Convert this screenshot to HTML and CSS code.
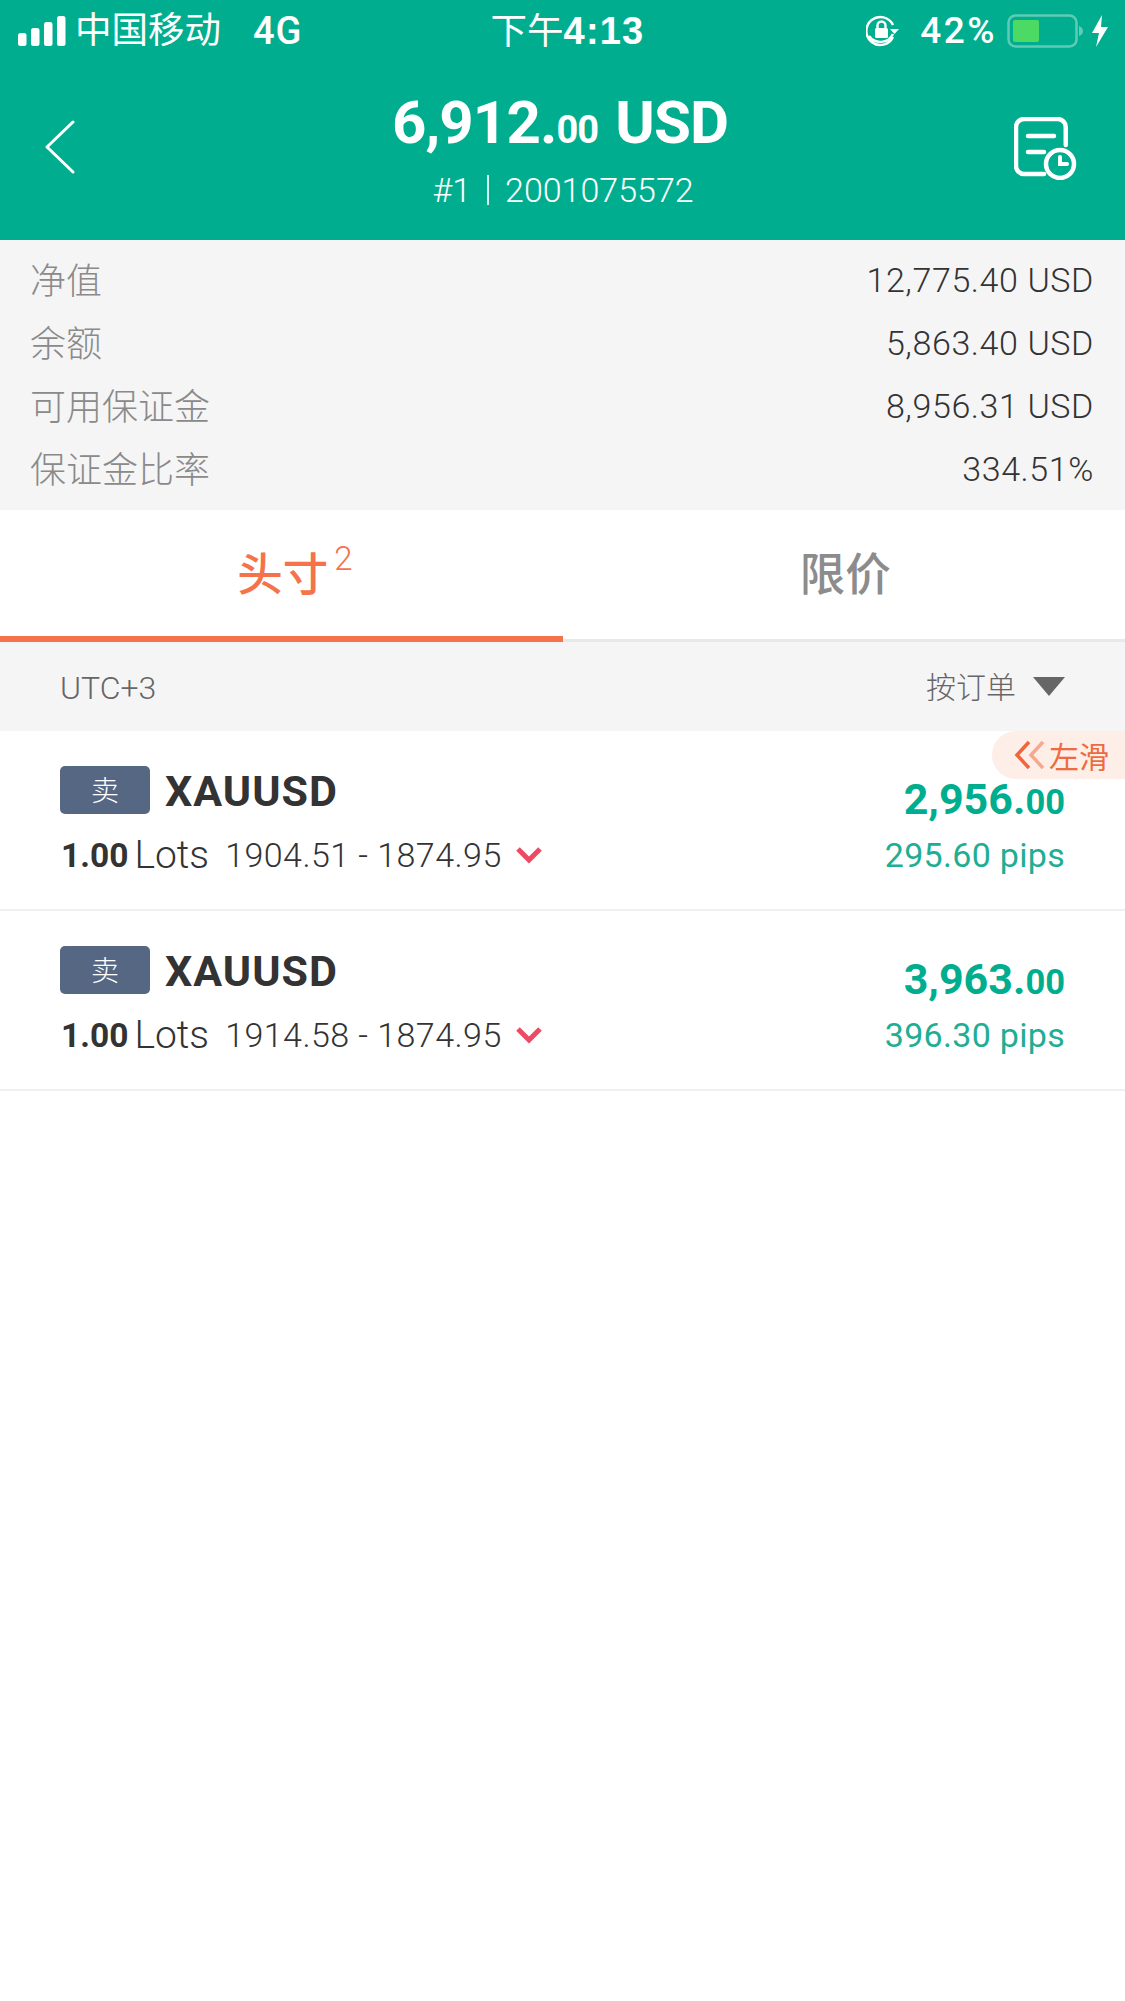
FILE: index.html
```html
<!DOCTYPE html>
<html lang="zh-CN">
<head>
<meta charset="utf-8">
<title>持仓</title>
<link rel="stylesheet" href="styles.css">
</head>
<body>
<header class="top">
  <div class="status">
    <div class="status-left">
      <svg class="signal" width="48" height="30" viewBox="0 0 48 30"><rect x="0" y="17" width="8.500" height="13" rx="2.500"/><rect x="13" y="12" width="8.500" height="18" rx="2.500"/><rect x="26" y="6" width="8.500" height="24" rx="2.500"/><rect x="39" y="0" width="8.500" height="30" rx="2.500"/></svg>
      <span class="carrier">中国移动</span>
      <span class="net">4G</span>
    </div>
    <div class="clock">下午<b>4:13</b></div>
    <div class="status-right">
      <svg class="lock" width="34" height="32" viewBox="0 0 34 32" fill="none" stroke="#fff" stroke-width="2.400"><path d="M27 22a14 14 0 1 1 0-12M27 19a14 14 0 0 1-24 2"/><path d="M24 14h9l-4.500 5z" fill="#fff" stroke="none"/><rect x="9" y="13" width="13" height="10" rx="1.500" fill="#fff" stroke="none"/><path d="M11.500 13v-2.500a4 4 0 0 1 8 0V13"/></svg>
      <span class="pct">42%</span>
      <svg class="battery" width="76" height="34" viewBox="0 0 76 34"><rect x="1.500" y="1.500" width="68" height="31" rx="7" fill="none" stroke="#5fcbb6" stroke-width="2.500"/><rect x="6" y="6" width="26" height="22" rx="2" fill="#4cd964"/><path d="M72 12c3 1 4 3 4 5s-1 4-4 5z" fill="#5fcbb6"/></svg>
      <svg class="bolt" width="18" height="32" viewBox="0 0 18 32"><path d="M11 0 1 18h7l-3 14L17 12h-7z" fill="#fff"/></svg>
    </div>
  </div>
  <div class="nav">
    <svg class="back" width="34" height="54" viewBox="0 0 34 54" fill="none" stroke="#fff" stroke-width="3" stroke-linecap="round" stroke-linejoin="round"><path d="M30 2 4 27l26 25"/></svg>
    <div class="title">
      <div class="amount">6,912.<small>00</small> USD</div>
      <div class="account"><span>#1</span><span class="sep"></span><span>2001075572</span></div>
    </div>
    <svg class="history" width="63" height="63" viewBox="0 0 63 63" fill="none" stroke="#fff" stroke-width="4.500" stroke-linecap="round"><path d="M51.750 28V10a8 8 0 0 0-8-8H10a8 8 0 0 0-8 8v39a8 8 0 0 0 8 8h20"/><path d="M14 19h26M14 35h16"/><circle cx="46" cy="47" r="14"/><path d="M46 40v7h7" stroke-width="4"/></svg>
  </div>
</header>

<section class="summary">
  <div class="sum-row"><span class="label">净值</span><span class="num">12,775.40 USD</span></div>
  <div class="sum-row"><span class="label">余额</span><span class="num">5,863.40 USD</span></div>
  <div class="sum-row"><span class="label">可用保证金</span><span class="num">8,956.31 USD</span></div>
  <div class="sum-row"><span class="label">保证金比率</span><span class="num">334.51%</span></div>
</section>

<nav class="tabs">
  <div class="tab active"><span class="tab-text">头寸<sup>2</sup></span></div>
  <div class="tab"><span class="tab-text">限价</span></div>
</nav>

<div class="filter">
  <span class="utc">UTC+3</span>
  <div class="sort"><span class="label">按订单</span><i class="caret"></i></div>
</div>

<main class="list">
  <div class="hint">
    <svg width="32" height="30" viewBox="0 0 32 30" fill="none" stroke-width="3.500"><path d="M15 2 3 15l12 13" stroke="#f0663c"/><path d="M29 2 17 15l12 13" stroke="#f7a98f"/></svg>
    <span>左滑</span>
  </div>
  <article class="row">
    <div class="row-left">
      <div class="line1"><span class="badge">卖</span><span class="symbol">XAUUSD</span></div>
      <div class="line2"><b>1.00</b><span class="lots">Lots</span><span class="price">1904.51 - 1874.95</span>
        <svg class="chev" width="26" height="18" viewBox="0 0 26 18" fill="none" stroke="#ee4a63" stroke-width="5"><path d="M2 3l11 11L24 3"/></svg></div>
    </div>
    <div class="row-right">
      <div class="profit">2,956.<small>00</small></div>
      <div class="pips">295.60 pips</div>
    </div>
  </article>
  <article class="row">
    <div class="row-left">
      <div class="line1"><span class="badge">卖</span><span class="symbol">XAUUSD</span></div>
      <div class="line2"><b>1.00</b><span class="lots">Lots</span><span class="price">1914.58 - 1874.95</span>
        <svg class="chev" width="26" height="18" viewBox="0 0 26 18" fill="none" stroke="#ee4a63" stroke-width="5"><path d="M2 3l11 11L24 3"/></svg></div>
    </div>
    <div class="row-right">
      <div class="profit">3,963.<small>00</small></div>
      <div class="pips">396.30 pips</div>
    </div>
  </article>
</main>
</body>
</html>
```
FILE: styles.css
```css
* { box-sizing: border-box; }
html, body { margin: 0; padding: 0; }
body {
  width: 1125px;
  height: 2001px;
  overflow: hidden;
  background: #fff;
  font-family: Roboto, "Noto Sans CJK SC", sans-serif;
  color: #333;
}
.top { height: 240px; background: #00ae8f; color: #fff; }
.status {
  height: 62px;
  padding: 0 16px 0 18px;
  display: grid;
  grid-template-columns: 1fr auto 1fr;
  align-items: center;
}
.status-left, .status-right { display: flex; align-items: center; }
.status-right { justify-content: flex-end; }
.carrier { font-size: 36.500px; margin-left: 9px; line-height: 40px; }
.net { font-size: 38px; font-weight: 500; line-height: 40px; margin-left: 32px; letter-spacing: 1px; }
.signal { fill: #fff; }
.clock { font-size: 36.500px; line-height: 40px; padding-left: 8px; }
.clock b { font-family: "Liberation Sans", sans-serif; font-size: 38px; font-weight: 700; letter-spacing: 1.200px; }
.lock { margin-right: 20px; }
.pct { font-size: 37px; font-weight: 500; line-height: 40px; letter-spacing: 2.500px; margin-right: 10px; }
.bolt { margin-left: 8px; }
.nav {
  height: 178px;
  padding: 0 48px 0 43px;
  display: grid;
  grid-template-columns: 1fr auto 1fr;
  align-items: start;
}
.back { margin-top: 58px; }
.title { text-align: center; margin-top: 30px; }
.amount {
  font-size: 60px;
  line-height: 62px;
  font-weight: 700;
  letter-spacing: -0.900px;
  word-spacing: 3px;
}
.amount small { font-size: 38px; font-weight: 700; }
.account {
  font-size: 34px;
  line-height: 40px;
  margin-top: 9px;
  padding-left: 6px;
  font-weight: 300;
  display: flex;
  justify-content: center;
  align-items: center;
  gap: 16px;
}
.sep { width: 2px; height: 30px; background: #d5f3ee; }
.history { margin-top: 55px; justify-self: end; }
.summary {
  height: 270px;
  padding: 8px 31px 8px 30px;
  background: #f5f5f6;
  display: flex;
  flex-direction: column;
}
.sum-row {
  height: 63px;
  display: flex;
  justify-content: space-between;
  align-items: center;
  font-size: 36px;
  color: #8a8a8a;
  font-weight: 300;
}
.label { padding-bottom: 4px; }
.sum-row .num { font-size: 34px; color: #333; letter-spacing: 0.600px; font-weight: 300; }
.tabs {
  height: 132px;
  display: flex;
  border-bottom: 3px solid #e8e8e8;
}
.tab {
  flex: 1;
  display: flex;
  align-items: center;
  justify-content: center;
  font-size: 45.500px;
  color: #8c8c8c;
  font-weight: 500;
  margin-bottom: -3px;
  padding: 0 0 5px 3px;
  border-bottom: 6px solid transparent;
}
.tab.active { color: #f5734a; border-bottom-color: #f5734a; }
.tab-text { position: relative; }
.tab sup {
  position: absolute;
  left: 100%;
  top: 1px;
  margin-left: 6px;
  font-size: 33px;
  font-weight: 300;
  line-height: 40px;
}
.filter {
  height: 89px;
  background: #f5f5f6;
  padding: 0 60px;
  display: flex;
  align-items: center;
  justify-content: space-between;
  font-size: 30px;
  color: #666;
  font-weight: 300;
}
.utc { font-size: 32px; padding-top: 2px; }
.sort { display: flex; align-items: center; gap: 17px; }
.caret {
  width: 0;
  height: 0;
  border-left: 16px solid transparent;
  border-right: 16px solid transparent;
  border-top: 19px solid #666;
}
.list { position: relative; }
.hint {
  position: absolute;
  top: 0;
  right: 0;
  width: 133px;
  height: 48px;
  border-radius: 24px 0 0 24px;
  background: #fdeee7;
  color: #ee6a42;
  font-size: 30px;
  display: flex;
  align-items: center;
  gap: 3px;
  padding-left: 22px;
}
.row {
  height: 180px;
  border-bottom: 2px solid #f0f0f0;
  padding: 0 60px;
  display: flex;
  justify-content: space-between;
}
.row-left { padding-top: 35px; }
.line1 { display: flex; align-items: center; height: 48px; gap: 15px; }
.badge {
  width: 90px;
  height: 48px;
  background: #566783;
  border-radius: 5px;
  color: #fff;
  font-size: 28px;
  font-weight: 300;
  display: flex;
  align-items: center;
  justify-content: center;
  padding-bottom: 2px;
}
.symbol { font-size: 43px; font-weight: 700; color: #333; letter-spacing: 1px; padding-top: 2px; }
.line2 {
  display: flex;
  align-items: center;
  height: 48px;
  margin-top: 17px;
  color: #333;
  font-size: 34px;
  font-weight: 300;
}
.line2 b { font-size: 33.500px; font-weight: 700; margin-left: 1px; }
.lots { margin-left: 6px; font-size: 39px; }
.price { margin-left: 16px; letter-spacing: 0.450px; }
.chev { margin-left: 14px; }
.row-right { text-align: right; padding-top: 42px; }
.profit { font-size: 43px; line-height: 52px; font-weight: 700; color: #00ae8f; }
.profit small { font-size: 34.500px; font-weight: 700; }
.pips { font-size: 34px; line-height: 44px; margin-top: 5px; color: #1fae94; font-weight: 400; letter-spacing: 0.300px; }
```
